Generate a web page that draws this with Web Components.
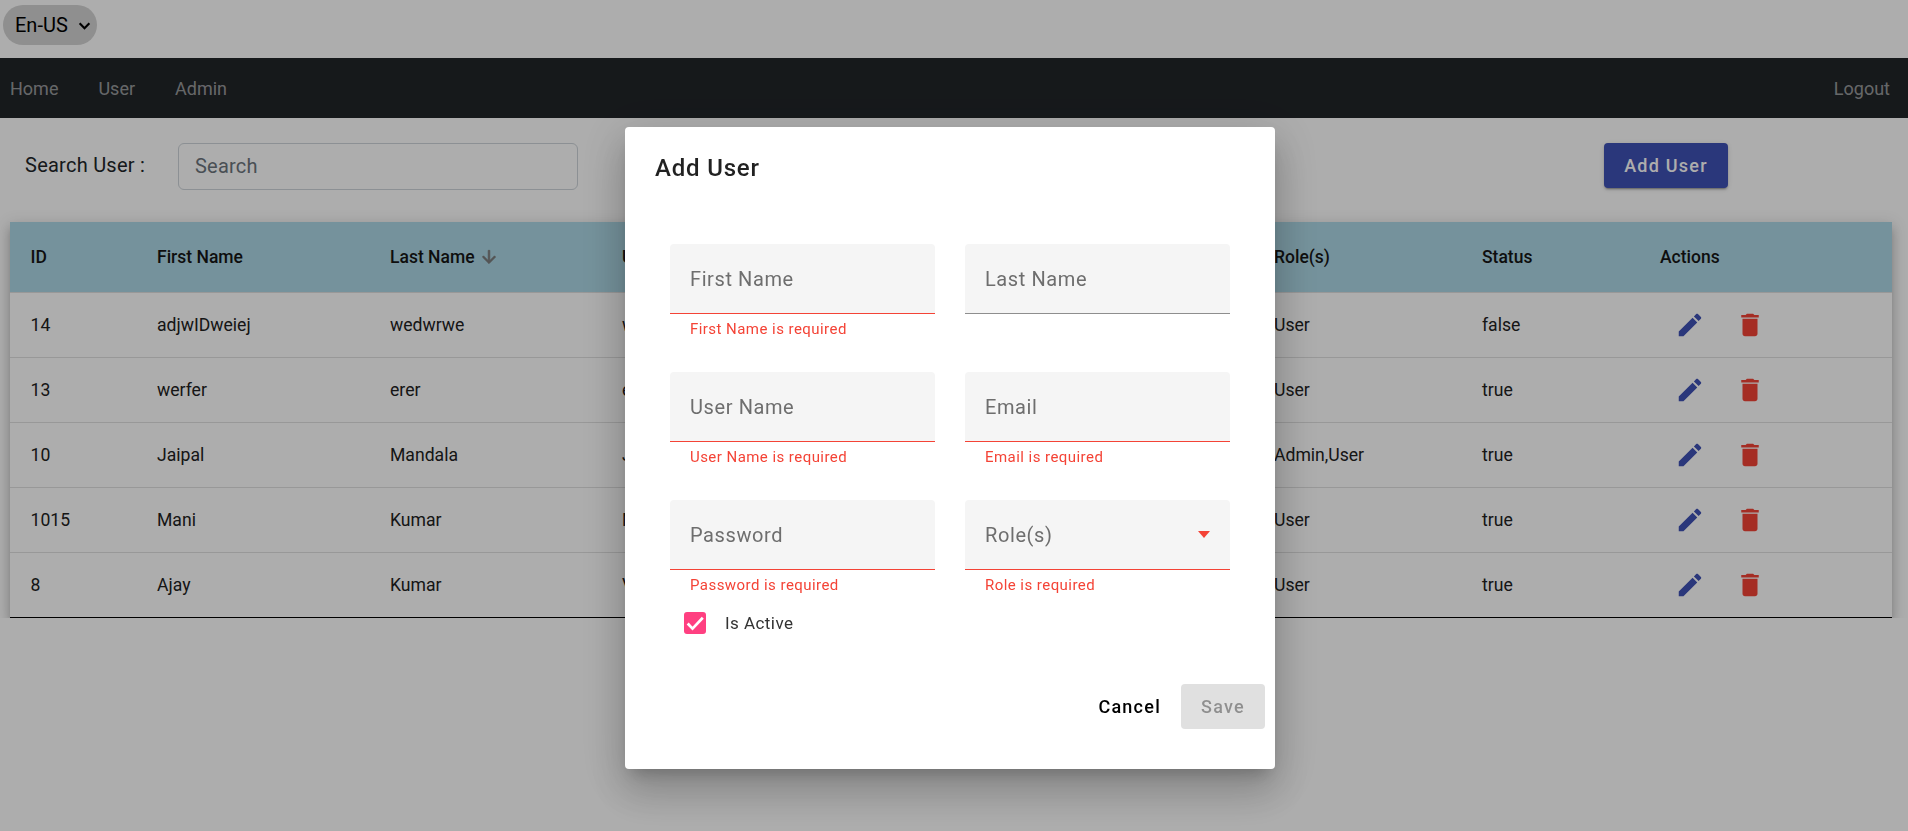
<!DOCTYPE html>
<html>
<head>
<meta charset="utf-8">
<title>Users</title>
<style>
html,body{margin:0;padding:0;height:100%;}
body{font-family:Roboto,"Liberation Sans",sans-serif;background:#fff;color:#212529;overflow:hidden;}
</style>
</head>
<body>
<app-shell></app-shell>

<template id="lang-tpl">
<style>
:host{display:block;height:58px;padding:5px 0 0 3px;box-sizing:border-box;}
.sel{display:inline-flex;align-items:center;width:94px;height:40px;box-sizing:border-box;background:#d3d3d3;border-radius:20px;padding-left:12px;font-size:20px;color:#000;}
svg{margin-left:10px;}
</style>
<div class="sel">En-US<svg width="13" height="13" viewBox="0 0 12 12"><path d="M1.5 4l4.5 4.5L10.500 4" fill="none" stroke="#000" stroke-width="2"/></svg></div>
</template>

<template id="nav-tpl">
<style>
:host{display:flex;align-items:center;height:60px;background:#212529;font-size:18px;color:rgba(255,255,255,.55);padding:0 18px 0 10px;}
a{margin-right:40px;}
.end{margin:0 0 0 auto;}
</style>
<a>Home</a><a>User</a><a>Admin</a><a class="end">Logout</a>
</template>

<template id="tool-tpl">
<style>
:host{display:flex;align-items:flex-start;padding:25px 180px 0 25px;height:104px;box-sizing:border-box;}
label{font-size:20px;letter-spacing:.25px;color:#212529;width:153px;line-height:45px;}
.inp{width:400px;height:47px;box-sizing:border-box;border:1px solid #ced4da;border-radius:6px;padding:0 16px 2px;font-size:20px;letter-spacing:.2px;color:#6c757d;display:flex;align-items:center;}
button{margin-left:auto;width:124px;height:45px;border:0;border-radius:4px;background:#3f51b5;color:#fff;font:500 18px Roboto,sans-serif;letter-spacing:1.25px;box-shadow:0 3px 1px -2px rgba(0,0,0,.2),0 2px 2px 0 rgba(0,0,0,.14),0 1px 5px 0 rgba(0,0,0,.12);}
</style>
<label>Search User :</label><div class="inp">Search</div><button>Add User</button>
</template>

<template id="table-tpl">
<style>
:host{display:block;margin:0 16px 0 10px;box-shadow:0 5px 5px -3px rgba(0,0,0,.2),0 8px 10px 1px rgba(0,0,0,.14),0 3px 14px 2px rgba(0,0,0,.12);clip-path:inset(-20px -20px 0 -20px);background:#fff;}
.head{display:grid;grid-template-columns:var(--cols);height:71px;align-items:center;background:#add8e6;font-size:17.5px;font-weight:500;color:#161616;border-bottom:1px solid #e0e0e0;box-sizing:border-box;}
.head span{display:flex;align-items:center;white-space:nowrap;}
.head span:first-child{padding-left:20.5px;}
.head svg{margin-left:4px;}
:host{--cols:147px 233px 232px 652px 208px 178px 1fr;}
::slotted(user-row:last-child){border-bottom:1px solid #000;}
</style>
<div class="head"><span>ID</span><span>First Name</span><span>Last Name<svg width="20" height="20" viewBox="0 0 24 24"><path fill="#7c7c7c" stroke="#7c7c7c" stroke-width=".8" d="M20 12l-1.41-1.41L13 16.17V4h-2v12.17l-5.58-5.59L4 12l8 8 8-8z"/></svg></span><span>User Name</span><span>Role(s)</span><span>Status</span><span>Actions</span></div>
<slot></slot>
</template>

<template id="row-tpl">
<style>
:host{display:grid;grid-template-columns:147px 233px 232px 652px 208px 178px 1fr;height:65px;align-items:center;box-sizing:border-box;border-bottom:1px solid #e0e0e0;font-size:17.6px;color:#212121;}
#id{padding-left:20.5px;}
.acts{display:flex;padding-left:15px;}
.acts svg{width:30px;height:30px;margin-right:30px;}
</style>
<div id="id"></div><div id="fn"></div><div id="ln"></div><div id="un"></div><div id="role"></div><div id="st"></div>
<div class="acts"><svg viewBox="0 0 24 24"><path fill="#3f51b5" d="M3 17.25V21h3.75L17.81 9.94l-3.75-3.75L3 17.25zM20.71 7.04c.39-.39.39-1.02 0-1.41l-2.34-2.34c-.39-.39-1.02-.39-1.41 0l-1.83 1.83 3.75 3.75 1.83-1.83z"/></svg><svg viewBox="0 0 24 24"><path fill="#f44336" d="M6 19c0 1.1.9 2 2 2h8c1.1 0 2-.9 2-2V7H6v12zM19 4h-3.5l-1-1h-5l-1 1H5v2h14V4z"/></svg></div>
</template>

<template id="field-tpl">
<style>
:host{display:block;height:128px;width:265px;}
.box{height:70px;box-sizing:border-box;background:#f5f5f5;border-radius:4px 4px 0 0;border-bottom:1px solid #8e8e8e;padding:0 20px;display:flex;align-items:center;justify-content:space-between;font-size:20px;letter-spacing:.6px;color:#6e6e6e;}
:host([error]) .box{border-bottom:1px solid #f44336;}
.err{font-size:15px;letter-spacing:.45px;color:#f44336;padding:6px 20px 0;}
i{display:none;width:0;height:0;border:6.5px solid transparent;border-top:7px solid #f44336;border-bottom:0;}
:host([caret]) i{display:block;}
</style>
<div class="box"><span id="lab"></span><i></i></div>
<div class="err" id="err"></div>
</template>

<template id="dialog-tpl">
<style>
:host{position:fixed;inset:0;display:flex;align-items:flex-start;justify-content:center;padding:127px 8px 0 0;background:rgba(0,0,0,.32);}
.card{width:650px;height:642px;box-sizing:border-box;background:#fff;border-radius:4px;padding:25px 10px 0 30px;color:rgba(0,0,0,.87);box-shadow:0 11px 15px -7px rgba(0,0,0,.2),0 24px 38px 3px rgba(0,0,0,.14),0 9px 46px 8px rgba(0,0,0,.12);}
h2{margin:0;font-size:24px;font-weight:500;line-height:32px;letter-spacing:.8px;}
.grid{display:grid;grid-template-columns:265px 265px;column-gap:30px;margin:60px 0 0 15px;}
.check{display:flex;align-items:center;height:22px;margin:-16px 0 0 29px;font-size:17px;letter-spacing:.45px;color:#333;}
.check b{width:22px;height:22px;border-radius:3px;background:#ff4081;margin-right:19px;display:flex;}
.foot{display:flex;justify-content:flex-end;align-items:center;margin-top:50px;}
.cancel{font-weight:500;font-size:18px;letter-spacing:1.25px;color:#000;margin-right:20px;}
.save{width:84px;height:45px;border-radius:4px;background:#e0e0e0;color:rgba(0,0,0,.36);font-weight:500;font-size:18px;letter-spacing:1.25px;display:flex;align-items:center;justify-content:center;}
</style>
<div class="card">
<h2>Add User</h2>
<div class="grid"><slot></slot></div>
<div class="check"><b><svg width="22" height="22" viewBox="0 0 24 24"><path fill="none" stroke="#fff" stroke-width="3" d="M4 12.500l5.300 5.600L20.500 6.200"/></svg></b>Is Active</div>
<div class="foot"><span class="cancel">Cancel</span><span class="save">Save</span></div>
</div>
</template>

<script>
const tplOf=id=>document.getElementById(id).content.cloneNode(true);
class Base extends HTMLElement{
    constructor(id){
        super();
        this.attachShadow({mode:'open'}).appendChild(tplOf(id));
    }
}
class LangBar extends Base{constructor(){super('lang-tpl')}}
class NavBar extends Base{constructor(){super('nav-tpl')}}
class ToolBar extends Base{constructor(){super('tool-tpl')}}
class UserTable extends Base{constructor(){super('table-tpl')}}
class UserRow extends Base{
    constructor(){super('row-tpl')}
    connectedCallback(){
        for(const k of ['id','fn','ln','un','role','st']){
            this.shadowRoot.getElementById(k).textContent=this.getAttribute('d-'+k);
        }
    }
}
class FormField extends Base{
    constructor(){super('field-tpl')}
    connectedCallback(){
        this.shadowRoot.getElementById('lab').textContent=this.getAttribute('label');
        this.shadowRoot.getElementById('err').textContent=this.getAttribute('error')||'';
    }
}
class AddDialog extends Base{constructor(){super('dialog-tpl')}}
class AppShell extends HTMLElement{
    constructor(){
        super();
        const rows=[
            ['14','adjwIDweiej','wedwrwe','wedwrwe','User','false'],
            ['13','werfer','erer','erer','User','true'],
            ['10','Jaipal','Mandala','Jaipal','Admin,User','true'],
            ['1015','Mani','Kumar','Mani','User','true'],
            ['8','Ajay','Kumar','Vijay','User','true']
        ];
        const rowHtml=rows.map(r=>`<user-row d-id="${r[0]}" d-fn="${r[1]}" d-ln="${r[2]}" d-un="${r[3]}" d-role="${r[4]}" d-st="${r[5]}"></user-row>`).join('');
        this.attachShadow({mode:'open'}).innerHTML=`
        <style>:host{display:block;}</style>
        <lang-bar></lang-bar><nav-bar></nav-bar><tool-bar></tool-bar>
        <user-table>${rowHtml}</user-table>
        <add-dialog>
            <form-field label="First Name" error="First Name is required"></form-field>
            <form-field label="Last Name"></form-field>
            <form-field label="User Name" error="User Name is required"></form-field>
            <form-field label="Email" error="Email is required"></form-field>
            <form-field label="Password" error="Password is required"></form-field>
            <form-field label="Role(s)" error="Role is required" caret></form-field>
        </add-dialog>`;
    }
}
customElements.define('lang-bar',LangBar);
customElements.define('nav-bar',NavBar);
customElements.define('tool-bar',ToolBar);
customElements.define('user-row',UserRow);
customElements.define('user-table',UserTable);
customElements.define('form-field',FormField);
customElements.define('add-dialog',AddDialog);
customElements.define('app-shell',AppShell);
</script>
</body>
</html>
